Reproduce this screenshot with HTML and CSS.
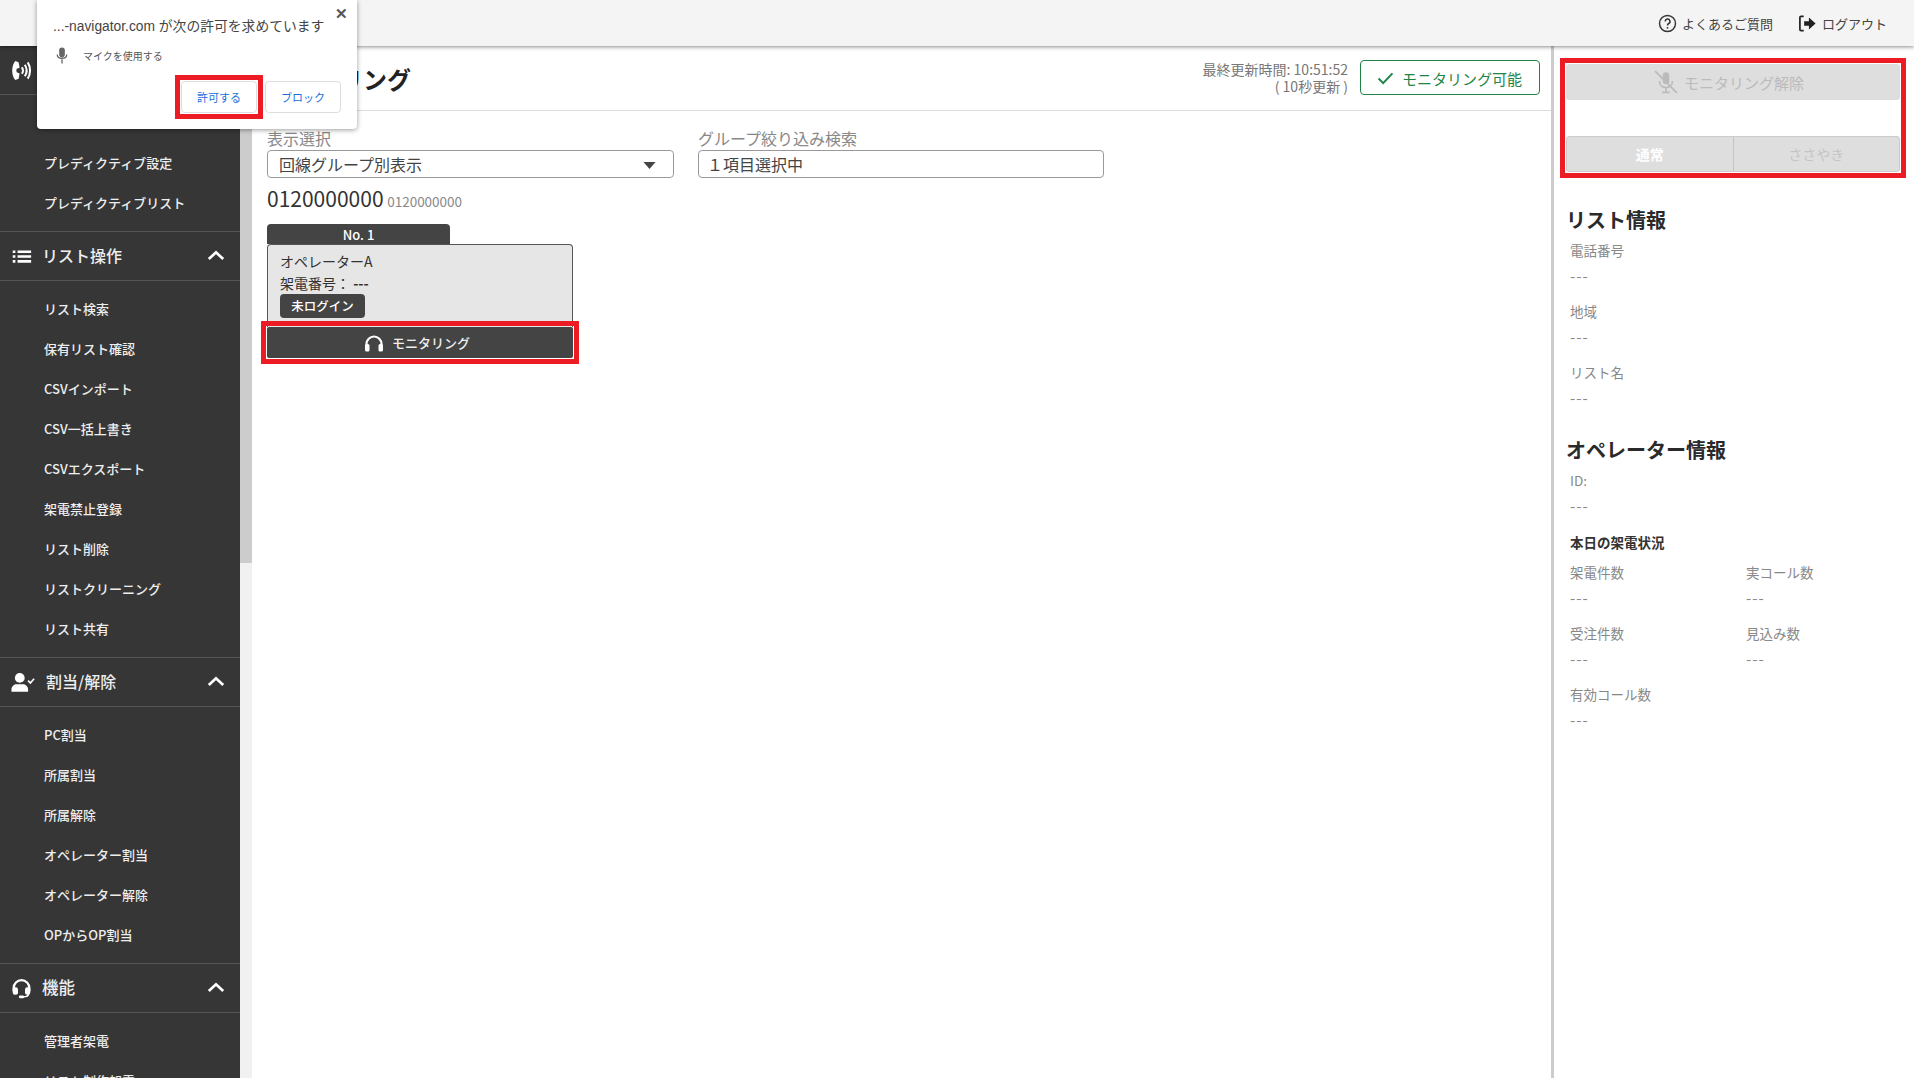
FILE: index.html
```html
<!DOCTYPE html>
<html lang="ja">
<head>
<meta charset="utf-8">
<title>モニタリング</title>
<link rel="stylesheet" href="styles.css">
</head>
<body>
<div class="app">
  <header class="topbar">
    <a class="toplink faq">
      <svg class="ti" viewBox="0 0 20 20"><circle cx="10" cy="10" r="8.400" fill="none" stroke="#333" stroke-width="1.500"/><path d="M7.600 7.800a2.500 2.500 0 1 1 3.700 2.200c-.9.500-1.300 1-1.300 2" fill="none" stroke="#333" stroke-width="1.600"/><circle cx="10" cy="14.600" r="1" fill="#333"/></svg>
      <span>よくあるご質問</span>
    </a>
    <a class="toplink">
      <svg class="ti" viewBox="0 0 20 20"><path d="M6 2.500H3.200A1.200 1.200 0 0 0 2 3.700v12.600a1.200 1.200 0 0 0 1.200 1.200H6" fill="none" stroke="#222" stroke-width="1.800"/><path d="M6.500 7.600h5V3.800L18.500 10l-7 6.200v-3.800h-5z" fill="#222"/></svg>
      <span>ログアウト</span>
    </a>
  </header>

  <div class="body">
    <nav class="sidebar">
      <div class="sec-head">
        <svg class="si big" viewBox="0 0 24 24"><path d="M9 3.500 5.500 2C1.300 7 1.300 17 5.500 22L9 20.500l1-5.500-3-1.200c-.4-1-.4-2.600 0-3.600l3-1.200z" fill="#fff"/><path d="M12.500 8.500c1.200 2 1.200 5 0 7M15.500 6c2.200 3.500 2.200 8.500 0 12M18.500 3.500c3.200 5 3.200 12 0 17" fill="none" stroke="#fff" stroke-width="2.100"/></svg>
      </div>
      <ul class="items first">
        <li>プレディクティブ設定</li>
        <li>プレディクティブリスト</li>
      </ul>
      <div class="sec-head">
        <svg class="si" viewBox="0 0 24 24"><path d="M2 5h3v3H2zM2 10.500h3v3H2zM2 16h3v3H2zM7.500 5H23v3H7.500zM7.500 10.500H23v3H7.500zM7.500 16H23v3H7.500z" fill="#fff"/></svg>
        <span class="sec-title">リスト操作</span>
        <svg class="chev" viewBox="0 0 20 12"><path d="M2 10 10 2.500 18 10" fill="none" stroke="#fff" stroke-width="3"/></svg>
      </div>
      <ul class="items">
        <li>リスト検索</li>
        <li>保有リスト確認</li>
        <li>CSVインポート</li>
        <li>CSV一括上書き</li>
        <li>CSVエクスポート</li>
        <li>架電禁止登録</li>
        <li>リスト削除</li>
        <li>リストクリーニング</li>
        <li>リスト共有</li>
      </ul>
      <div class="sec-head">
        <svg class="si wide" viewBox="0 0 26 22"><circle cx="9.500" cy="6" r="5.300" fill="#fff"/><path d="M0.500 21v-2.500C.5 15 3.500 12.800 6 12.800h7c2.500 0 5.500 2.200 5.500 5.700V21z" fill="#fff"/><path d="m18.500 9 2.500 2.500 4-4.500" fill="none" stroke="#fff" stroke-width="1.800"/></svg>
        <span class="sec-title">割当/解除</span>
        <svg class="chev" viewBox="0 0 20 12"><path d="M2 10 10 2.500 18 10" fill="none" stroke="#fff" stroke-width="3"/></svg>
      </div>
      <ul class="items">
        <li>PC割当</li>
        <li>所属割当</li>
        <li>所属解除</li>
        <li>オペレーター割当</li>
        <li>オペレーター解除</li>
        <li>OPからOP割当</li>
      </ul>
      <div class="sec-head">
        <svg class="si" viewBox="0 0 24 24"><path d="M3 15v-3.500a9 9 0 0 1 18 0V15" fill="none" stroke="#fff" stroke-width="2.600"/><rect x="2" y="10.500" width="6" height="8.500" rx="2.500" fill="#fff"/><rect x="16" y="10.500" width="6" height="8.500" rx="2.500" fill="#fff"/><path d="M20 18c0 3-3 3.500-6 3.500" fill="none" stroke="#fff" stroke-width="1.800"/><rect x="9" y="20" width="6" height="3.200" rx="1.600" fill="#fff"/></svg>
        <span class="sec-title t3">機能</span>
        <svg class="chev" viewBox="0 0 20 12"><path d="M2 10 10 2.500 18 10" fill="none" stroke="#fff" stroke-width="3"/></svg>
      </div>
      <ul class="items">
        <li>管理者架電</li>
        <li>リスト制作架電</li>
      </ul>
    </nav>
    <div class="scrolltrack"><div class="scrollthumb"></div></div>

    <main class="main">
      <div class="pagehead">
        <h1 class="pagetitle">モニタリング</h1>
        <div class="update">最終更新時間: 10:51:52<br>( 10秒更新 )</div>
        <div class="ready">
          <svg class="check" viewBox="0 0 18 14"><path d="m1.500 7 5 5 10-10.500" fill="none" stroke="#1f8546" stroke-width="2.200"/></svg>
          モニタリング可能
        </div>
      </div>
      <div class="content">
        <div class="filters">
          <div class="field">
            <div class="flabel">表示選択</div>
            <div class="control">回線グループ別表示
              <svg class="caret" viewBox="0 0 12 7"><path d="M0 0h12L6 7z" fill="#444"/></svg>
            </div>
          </div>
          <div class="field narrow">
            <div class="flabel">グループ絞り込み検索</div>
            <div class="control tight">１項目選択中</div>
          </div>
        </div>
        <div class="linehead"><span class="num">0120000000</span> <span class="numsub">0120000000</span></div>
        <div class="opcard">
          <div class="optab">No. 1</div>
          <div class="opbody">
            <div class="opname">オペレーターA</div>
            <div class="opnum">架電番号： <b>---</b></div>
            <span class="badge">未ログイン</span>
          </div>
          <div class="mark">
            <button class="monbtn">
              <svg class="hp" viewBox="0 0 20 18"><path d="M2.500 13V10a7.500 7.500 0 0 1 15 0v3" fill="none" stroke="#fff" stroke-width="2.200"/><rect x="1" y="10" width="4.500" height="7.500" rx="1.500" fill="#fff"/><rect x="14.500" y="10" width="4.500" height="7.500" rx="1.500" fill="#fff"/></svg>
              モニタリング
            </button>
          </div>
        </div>
      </div>
    </main>

    <aside class="panel">
      <div class="controls">
        <div class="release">
          <svg class="micoff" viewBox="0 0 22 22"><rect x="8" y="2" width="6" height="11" rx="3" fill="#bbb"/><path d="M5 10c0 8 12 8 12 0M11 16v4M7.500 20.500h7" fill="none" stroke="#bbb" stroke-width="1.500"/><path d="M1 1 21 21" stroke="#bbb" stroke-width="1.600"/></svg>
          モニタリング解除
        </div>
        <div class="toggle">
          <div class="tg on">通常</div>
          <div class="tg">ささやき</div>
        </div>
      </div>
      <h2 class="ph first">リスト情報</h2>
      <dl class="info"><dt>電話番号</dt><dd>---</dd></dl>
      <dl class="info"><dt>地域</dt><dd>---</dd></dl>
      <dl class="info"><dt>リスト名</dt><dd>---</dd></dl>
      <h2 class="ph second">オペレーター情報</h2>
      <dl class="info"><dt>ID:</dt><dd>---</dd></dl>
      <h3 class="sub">本日の架電状況</h3>
      <div class="stats">
        <dl class="info"><dt>架電件数</dt><dd>---</dd></dl>
        <dl class="info"><dt>実コール数</dt><dd>---</dd></dl>
        <dl class="info"><dt>受注件数</dt><dd>---</dd></dl>
        <dl class="info"><dt>見込み数</dt><dd>---</dd></dl>
        <dl class="info"><dt>有効コール数</dt><dd>---</dd></dl>
      </div>
    </aside>
  </div>

  <div class="perm">
    <span class="permx">✕</span>
    <div class="permtitle">...-navigator.com が次の許可を求めています</div>
    <div class="permrow">
      <svg class="mic" viewBox="0 0 12 18"><rect x="3" y="0.500" width="6" height="10.500" rx="3" fill="#666"/><path d="M1 8c0 5.500 10 5.500 10 0M6 13v4.500" fill="none" stroke="#666" stroke-width="1.400"/></svg>
      <span>マイクを使用する</span>
    </div>
    <div class="permbtns">
      <div class="mark"><button class="pbtn">許可する</button></div>
      <button class="pbtn">ブロック</button>
    </div>
  </div>
</div>
</body>
</html>
```

FILE: styles.css
```css
* { box-sizing: border-box; }
html, body { margin: 0; height: 100%; overflow: hidden; }
body {
  font-family: "Noto Sans CJK JP", "Noto Sans", sans-serif;
  color: #333;
  background: #fff;
}
.app { position: relative; height: 1078px; display: flex; flex-direction: column; }

.mark { display: block; outline: 5px solid #ed1c24; outline-offset: 1px; }

.topbar {
  height: 46px;
  flex: none;
  background: #f4f4f4;
  box-shadow: 0 1px 4px rgba(0, 0, 0, .45);
  display: flex;
  justify-content: flex-end;
  align-items: center;
  gap: 25px;
  padding: 0 27px 0 0;
  position: relative;
  z-index: 2;
}
.toplink { display: flex; align-items: center; gap: 5px; font-size: 13px; color: #444; }
.ti { width: 19px; height: 19px; }

.body { flex: 1; display: flex; min-height: 0; }

.sidebar { width: 240px; flex: none; background: #363636; color: #fff; overflow: hidden; }
.sec-head {
  height: 49px;
  display: flex;
  align-items: center;
  padding: 0 15px 0 11px;
  border-bottom: 1px solid #555;
  gap: 11px;
}
.si { width: 21px; height: 21px; flex: none; margin-right: -1px; }
.si.big { width: 23px; height: 23px; margin-left: -1px; }
.si.wide { width: 24px; height: 21px; margin-right: 0; }
.sec-title { flex: 1; font-size: 16px; font-weight: 500; color: #eee; padding-bottom: 2px; }
.sec-title.t3 { font-size: 16.500px; }
.chev { width: 18px; height: 11px; flex: none; margin-bottom: 2px; }
.items {
  list-style: none;
  margin: 0;
  padding: 8px 0;
  border-bottom: 1px solid #555;
}
.items.first { padding-top: 48px; }
.items li {
  height: 40px;
  line-height: 40px;
  padding-left: 44px;
  font-size: 13px;
  font-weight: 500;
  color: #eee;
}

.scrolltrack { width: 12px; flex: none; background: #f1f1f1; }
.scrollthumb { height: 517px; background: #ccc; }

.main { flex: 1; min-width: 0; background: #fff; }
.pagehead {
  height: 65px;
  display: flex;
  align-items: center;
  padding: 0 11px 0 15px;
  border-bottom: 1px solid #ddd;
}
.pagetitle { margin: 0; flex: 1; font-size: 24px; font-weight: 700; color: #222; }
.update { font-size: 14px; line-height: 17px; color: #777; text-align: right; margin-right: 12px; padding-bottom: 1px; }
.ready {
  width: 180px;
  height: 35px;
  border: 1px solid #1f8546;
  border-radius: 4px;
  color: #1f8546;
  font-size: 15px;
  display: flex;
  align-items: center;
  justify-content: center;
  gap: 8px;
  padding: 2px 1px 0 0;
  margin-bottom: 2px;
}
.check { width: 17px; height: 13px; }

.content { padding: 16px 15px; }
.filters { display: flex; gap: 24px; }
.field { width: 407px; }
.field.narrow { width: 406px; }
.flabel { font-size: 16px; line-height: 23px; color: #888; }
.control {
  height: 28px;
  border: 1px solid #999;
  border-radius: 4px;
  padding-left: 11px;
  font-size: 16px;
  line-height: 26px;
  color: #444;
  position: relative;
}
.control.tight { padding-left: 8px; }
.caret { position: absolute; right: 17px; top: 11px; width: 13px; height: 7px; }
.linehead { margin-top: 4px; height: 42px; line-height: 32px; }
.num { font-size: 21px; color: #333; }
.numsub { font-size: 13.500px; color: #888; }

.opcard { width: 306px; }
.optab {
  width: 183px;
  height: 20px;
  background: #444;
  color: #fff;
  border-radius: 4px 4px 0 0;
  font-size: 13px;
  font-weight: 500;
  line-height: 21px;
  text-align: center;
}
.opbody {
  height: 83px;
  background: #e6e6e6;
  border: 1px solid #555;
  border-bottom: 0;
  border-radius: 4px 4px 0 0;
  padding: 5px 12px;
  font-size: 14px;
  color: #333;
}
.opname, .opnum { line-height: 22px; }
.opnum b { font-weight: 700; }
.badge {
  display: block;
  width: 85px;
  height: 24px;
  background: #444;
  color: #fff;
  border-radius: 4px;
  font-size: 12.500px;
  font-weight: 500;
  line-height: 24px;
  text-align: center;
}
.monbtn {
  display: flex;
  width: 306px;
  height: 31px;
  align-items: center;
  justify-content: center;
  gap: 8px;
  background: #444;
  color: #eee;
  border: 0;
  border-radius: 2px;
  font-family: inherit;
  font-size: 13px;
  font-weight: 500;
  padding: 0 6px 0 0;
}
.hp { width: 20px; height: 18px; }

.panel {
  width: 363px;
  flex: none;
  border-left: 3px solid #ccc;
  background: #fff;
  padding: 18px 14px 0 12px;
}
.controls { outline: 5px solid #ed1c24; outline-offset: 1px; }
.release {
  height: 36px;
  background: #dedede;
  border-radius: 3px;
  color: #bbb;
  font-size: 15px;
  display: flex;
  align-items: center;
  justify-content: center;
  gap: 6px;
  padding-right: 8px;
}
.micoff { width: 24px; height: 24px; }
.toggle {
  margin-top: 36px;
  display: flex;
  height: 36px;
  border: 1px solid #ccc;
  border-radius: 3px;
  background: #dedede;
  overflow: hidden;
}
.tg { flex: 1; text-align: center; font-size: 14px; line-height: 34px; color: #c4c4c4; }
.tg.on { color: #fff; font-weight: 700; border-right: 1px solid #c4c4c4; }

.ph { margin: 0 0 2px; font-size: 20px; line-height: 30px; font-weight: 700; color: #2a2a2a; }
.ph.first { margin-top: 33px; }
.ph.second { margin-top: 25px; margin-bottom: 2px; }
.info { margin: 0 0 10px; padding-left: 4px; font-size: 13.500px; color: #888; }
.info dt { margin: 0; line-height: 27px; }
.info dd { margin: 0; line-height: 24px; font-size: 15px; letter-spacing: 1px; color: #888; }
.sub { margin: 12px 0 5px 4px; font-size: 13.500px; line-height: 24px; font-weight: 700; color: #333; }
.stats { display: grid; grid-template-columns: 176px 1fr; }
.stats .info { height: 61px; margin: 0; }

.perm {
  position: absolute;
  left: 37px;
  top: 0;
  width: 320px;
  height: 129px;
  background: #fff;
  border-radius: 0 0 4px 4px;
  box-shadow: 0 1px 5px rgba(0, 0, 0, .4);
  padding: 17px 16px 0;
  z-index: 5;
  font-family: "Liberation Sans", "Noto Sans CJK JP", sans-serif;
}
.permx { position: absolute; right: 9px; top: 5px; font-size: 15px; font-weight: 700; color: #555; }
.permtitle { font-size: 13.800px; line-height: 20px; color: #444; white-space: nowrap; }
.permrow { display: flex; align-items: center; margin-top: 8px; height: 20px; font-size: 10px; color: #555; }
.mic { width: 12px; height: 17px; margin: 0 15px 0 3px; }
.permbtns { display: flex; justify-content: flex-end; gap: 8px; margin-top: 16px; }
.pbtn {
  display: block;
  width: 76px;
  height: 32px;
  background: #fff;
  border: 1px solid #ddd;
  border-radius: 4px;
  color: #1a6fdc;
  font-family: inherit;
  font-size: 11px;
}
```
